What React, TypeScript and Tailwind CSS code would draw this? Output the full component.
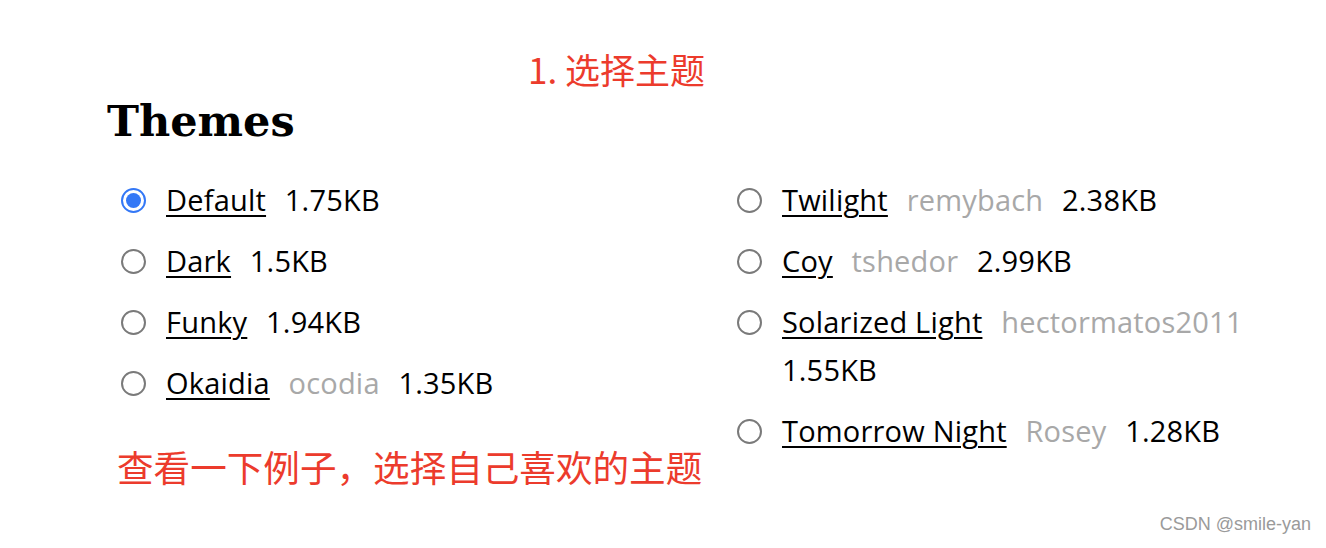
import React from "react";

type Theme = {
  name: string;
  author?: string;
  size: string;
  checked?: boolean;
};

const leftThemes: Theme[] = [
  { name: "Default", size: "1.75KB", checked: true },
  { name: "Dark", size: "1.5KB" },
  { name: "Funky", size: "1.94KB" },
  { name: "Okaidia", author: "ocodia", size: "1.35KB" },
];

const rightThemes: Theme[] = [
  { name: "Twilight", author: "remybach", size: "2.38KB" },
  { name: "Coy", author: "tshedor", size: "2.99KB" },
  { name: "Solarized Light", author: "hectormatos2011", size: "1.55KB" },
  { name: "Tomorrow Night", author: "Rosey", size: "1.28KB" },
];

function Radio({ checked }: { checked?: boolean }) {
  if (checked) {
    return (
      <span className="w-[25px] h-[25px] rounded-full border-[2px] border-[#3478f6] flex items-center justify-center shrink-0">
        <span className="w-[15px] h-[15px] rounded-full bg-[#3478f6]" />
      </span>
    );
  }
  return <span className="w-[25px] h-[25px] rounded-full border-[2px] border-[#7a7a7a] bg-white shrink-0" />;
}

function ThemeItem({ theme }: { theme: Theme }) {
  return (
    <li className="flex items-start gap-[20px] mb-[13px]">
      <span className="h-[48px] flex items-center shrink-0">
        <Radio checked={theme.checked} />
      </span>
      <span className="flex-1 min-w-0 leading-[48px]">
        <a className="underline underline-offset-[4px] decoration-[2px] text-black mr-[11px]">{theme.name}</a>{" "}
        {theme.author && (
          <>
            <span className="text-[#a8a8a8] mr-[11px]">{theme.author}</span>{" "}
          </>
        )}
        <span className="text-black">{theme.size}</span>
      </span>
    </li>
  );
}

export default function App() {
  return (
    <div className="w-[1326px] h-[548px] bg-white relative overflow-hidden font-['Open_Sans','Noto_Sans',sans-serif]">
      <div className="pl-[528px] pt-[46px] text-[35px] leading-[46px] text-[#ec3b2c] font-['Noto_Sans_CJK_SC',sans-serif]">
        1. 选择主题
      </div>
      <h1 className="pl-[107px] mt-[3px] text-[43px] leading-[52px] font-bold text-black font-['DejaVu_Serif',serif]">
        Themes
      </h1>
      <div className="grid grid-cols-[616px_1fr] pl-[121px] mt-[29px] text-[29px] tracking-[0.2px]">
        <div>
          <ul>
            {leftThemes.map(t => (
              <ThemeItem key={t.name} theme={t} />
            ))}
          </ul>
          <div className="-ml-[4px] mt-[36px] text-[36.6px] leading-[48px] tracking-normal text-[#ec3b2c] font-['Noto_Sans_CJK_SC',sans-serif]">
            查看一下例子，选择自己喜欢的主题
          </div>
        </div>
        <ul className="w-[530px]">
          {rightThemes.map(t => (
            <ThemeItem key={t.name} theme={t} />
          ))}
        </ul>
      </div>
      <div className="absolute right-[15px] bottom-[10px] text-[18px] text-[#9a9a9a] font-['Liberation_Sans',sans-serif]">
        CSDN @smile-yan
      </div>
    </div>
  );
}
